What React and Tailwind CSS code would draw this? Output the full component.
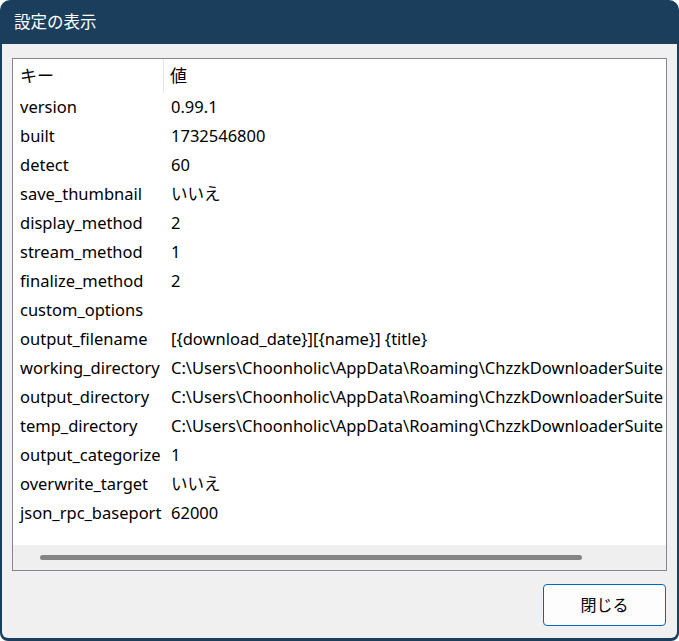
import React from 'react';

const rows = [
  ['version', '0.99.1'],
  ['built', '1732546800'],
  ['detect', '60'],
  ['save_thumbnail', 'いいえ'],
  ['display_method', '2'],
  ['stream_method', '1'],
  ['finalize_method', '2'],
  ['custom_options', ''],
  ['output_filename', '[{download_date}][{name}] {title}'],
  ['working_directory', 'C:\\Users\\Choonholic\\AppData\\Roaming\\ChzzkDownloaderSuite'],
  ['output_directory', 'C:\\Users\\Choonholic\\AppData\\Roaming\\ChzzkDownloaderSuite'],
  ['temp_directory', 'C:\\Users\\Choonholic\\AppData\\Roaming\\ChzzkDownloaderSuite'],
  ['output_categorize', '1'],
  ['overwrite_target', 'いいえ'],
  ['json_rpc_baseport', '62000'],
];

const font = { fontFamily: '"Noto Sans", "Noto Sans CJK JP", sans-serif' };

export default function App() {
  return (
    <div className="w-[679px] h-[641px] bg-white" style={font}>
      <div className="w-[679px] h-[641px] bg-[#1b3e5c] rounded-t-[10px] rounded-b-[8px] flex flex-col px-[2px] pb-[3px]">
        {/* Title bar */}
        <div className="h-[44px] flex items-center pl-[12px] text-white text-[16.5px]">設定の表示</div>

        {/* Body */}
        <div className="flex-1 bg-[#f0f0f0] rounded-b-[6px] flex flex-col pt-[14px] px-[10px]">
          <div className="h-[513px] border border-[#828790] bg-white flex flex-col overflow-hidden">
            {/* Header */}
            <div className="h-[34px] flex items-center text-[17px] text-black shrink-0">
              <div className="w-[151px] h-full flex items-center pl-[7px] border-r border-[#e5e5e5]">キー</div>
              <div className="pl-[6px]">値</div>
            </div>
            {/* Rows */}
            <div className="flex-1 flex flex-col">
              {rows.map(([k, v]) => (
                <div key={k} className="h-[29px] flex items-center text-[16.5px] text-black whitespace-nowrap">
                  <div className="w-[151px] pl-[7px] shrink-0">{k}</div>
                  <div className="pl-[7px]">{v}</div>
                </div>
              ))}
            </div>
            {/* Horizontal scrollbar */}
            <div className="h-[25px] bg-[#efefef] shrink-0 flex items-center pl-[27px]">
              <div className="w-[542px] h-[5px] rounded-full bg-[#858585]"></div>
            </div>
          </div>

          <div className="flex justify-end pt-[13px] pr-[1px]">
            <button className="w-[123px] h-[42px] rounded-[4px] border border-[#0067c0] bg-[#fdfdfd] text-[16px] text-black">閉じる</button>
          </div>
        </div>
      </div>
    </div>
  );
}
